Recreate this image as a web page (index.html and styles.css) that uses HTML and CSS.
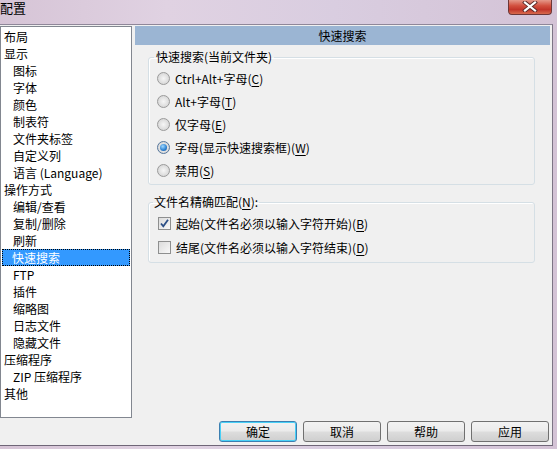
FILE: index.html
```html
<!DOCTYPE html>
<html lang="zh-CN">
<head>
    <meta charset="UTF-8">
    <title>配置</title>
    <link rel="stylesheet" href="styles.css">
</head>
<body>

<div class="titlebar">
    <span class="title">配置</span>
    <div class="close-btn">
        <svg width="16" height="11" viewBox="0 0 16 11">
            <path d="M3 1.5 L13 9.5 M13 1.5 L3 9.5" stroke="#5a2a28" stroke-width="4" stroke-linecap="square"/>
            <path d="M3 1.5 L13 9.5 M13 1.5 L3 9.5" stroke="#fff" stroke-width="2.2" stroke-linecap="square"/>
        </svg>
    </div>
</div>

<div class="window">
    <div class="main">
        <ul class="tree">
            <li>布局</li>
            <li>显示</li>
            <li class="child">图标</li>
            <li class="child">字体</li>
            <li class="child">颜色</li>
            <li class="child">制表符</li>
            <li class="child">文件夹标签</li>
            <li class="child">自定义列</li>
            <li class="child">语言 (Language)</li>
            <li>操作方式</li>
            <li class="child">编辑/查看</li>
            <li class="child">复制/删除</li>
            <li class="child">刷新</li>
            <li class="child selected">快速搜索</li>
            <li class="child">FTP</li>
            <li class="child">插件</li>
            <li class="child">缩略图</li>
            <li class="child">日志文件</li>
            <li class="child">隐藏文件</li>
            <li>压缩程序</li>
            <li class="child">ZIP 压缩程序</li>
            <li>其他</li>
        </ul>

        <div class="panel">
            <div class="panel-header">快速搜索</div>

            <fieldset class="group group-search">
                <legend>快速搜索(当前文件夹)</legend>
                <label class="option"><span class="radio"></span>Ctrl+Alt+字母(<u>C</u>)</label>
                <label class="option"><span class="radio"></span>Alt+字母(<u>T</u>)</label>
                <label class="option"><span class="radio"></span>仅字母(<u>E</u>)</label>
                <label class="option"><span class="radio checked"></span>字母(显示快速搜索框)(<u>W</u>)</label>
                <label class="option"><span class="radio"></span>禁用(<u>S</u>)</label>
            </fieldset>

            <fieldset class="group group-match">
                <legend>文件名精确匹配(<u>N</u>):</legend>
                <label class="option check-row">
                    <span class="checkbox">
                        <svg width="11" height="11" viewBox="0 0 11 11"><path d="M2 5.5 L4.3 8.3 L9 1.8" fill="none" stroke="#2c4f86" stroke-width="1.8"/></svg>
                    </span>起始(文件名必须以输入字符开始)(<u>B</u>)
                </label>
                <label class="option check-row"><span class="checkbox"></span>结尾(文件名必须以输入字符结束)(<u>D</u>)</label>
            </fieldset>
        </div>
    </div>

    <div class="buttons">
        <button class="btn default">确定</button>
        <button class="btn">取消</button>
        <button class="btn">帮助</button>
        <button class="btn">应用</button>
    </div>
</div>

</body>
</html>
```

FILE: styles.css
```css
body { margin: 0; width: 557px; height: 449px; overflow: hidden; background: linear-gradient(90deg, #d6c4d6 0%, #e0d2e2 30%, #d9cde0 60%, #d4c3d6 100%); font-family: "Noto Sans CJK SC", "Microsoft YaHei", sans-serif; font-size: 12px; color: #000; }

/* Title bar */
.titlebar { height: 24px; display: flex; justify-content: space-between; align-items: flex-start; }
.title { font-size: 13px; line-height: 16px; margin-left: 0; }
.close-btn { width: 44px; height: 16px; margin: -1px 5px 0 0; box-sizing: border-box; border: 1px solid #6d3636; border-top: none; border-radius: 0 0 4px 4px; background: linear-gradient(#e8a597 0%, #d2503f 45%, #c2352a 70%, #d76a4d 100%); display: flex; align-items: center; justify-content: center; }

/* Window client */
.window { width: 553px; height: 422px; box-sizing: border-box; background: #f0f0f0; border-top: 1px solid #8f8799; border-right: 1px solid #7d7585; border-bottom: 1px solid #6f6677; display: flex; flex-direction: column; }
.main { display: grid; grid-template-columns: 132px 1fr; column-gap: 3px; padding-top: 1px; }

/* Tree */
.tree { list-style: none; margin: 0; padding: 1px 0 0; height: 392px; box-sizing: border-box; background: #fff; border: 1px solid #828790; }
.tree li { height: 17px; line-height: 17px; padding-left: 3px; white-space: nowrap; }
.tree li.child { padding-left: 12px; }
.tree li.selected { margin: 0 1px 0 1px; padding-left: 10px; background: #3399ff; color: #fff; outline: 1px dotted #000; outline-offset: -1px; }

/* Right panel */
.panel { padding-right: 2px; }
.panel-header { height: 19px; line-height: 19px; text-align: center; background: #9bb5d3; }
.group { margin: 4px 15px 0 13px; padding: 0; border: 1px solid #d5dfe5; border-radius: 3px; box-shadow: inset 1px 1px 0 #fff; min-width: 0; }
.group legend { line-height: 16px; padding: 0 2px; margin-left: 5px; }
.group-search { padding: 2px 0 2px 0; }
.group-match { margin-top: 9px; padding: 1px 0 3px 0; }
.group-match legend { margin-left: 4px; padding: 0 1px; }

.option { display: flex; align-items: center; height: 23px; padding-left: 8px; white-space: nowrap; }
.check-row { height: 24px; }
.radio { width: 11px; height: 11px; border-radius: 50%; border: 1px solid #9a9a9a; background: radial-gradient(circle at 50% 50%, #f6f6f6 0%, #e0e0e0 55%, #cdcdcd 100%); margin-right: 5px; position: relative; flex: none; }
.radio.checked { border-color: #55769c; }
.radio.checked::after { content: ""; position: absolute; left: 2px; top: 2px; width: 7px; height: 7px; border-radius: 50%; background: radial-gradient(circle at 40% 35%, #9fd9ff 0%, #2b7fd0 60%, #1a4e8e 100%); }
.checkbox { width: 11px; height: 11px; border: 1px solid #8e8f8f; background: linear-gradient(135deg, #dcdcdc, #f8f8f8); margin: 0 5px 0 1px; display: flex; align-items: center; justify-content: center; flex: none; }
u { text-decoration: underline; text-underline-offset: 2px; }

/* Buttons */
.buttons { display: flex; justify-content: flex-end; gap: 6px; padding: 3px 3px 0 0; }
.btn { width: 78px; height: 21px; box-sizing: border-box; border: 1px solid #707070; border-radius: 3px; background: linear-gradient(#f2f2f2 0%, #ebebeb 48%, #dddddd 52%, #cfcfcf 100%); font-family: inherit; font-size: 12px; line-height: 17px; padding: 0; color: #000; }
.btn.default { border-color: #3c7fb1; box-shadow: inset 0 0 0 1px #48d0f7; }
```
